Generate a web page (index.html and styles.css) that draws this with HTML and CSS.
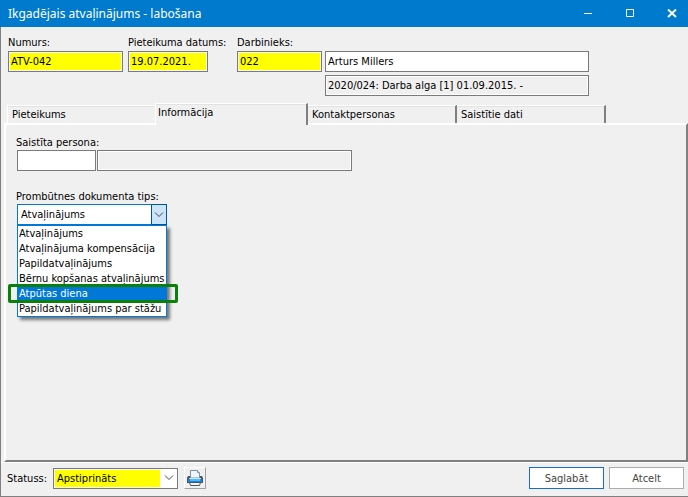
FILE: index.html
```html
<!DOCTYPE html>
<html lang="lv">
<head>
    <meta charset="UTF-8">
    <meta name="viewport" content="width=device-width, initial-scale=1.0">
    <title>Ikgadējais atvaļinājums - labošana</title>
    <link rel="stylesheet" href="styles.css">
</head>
<body>
    <header class="titlebar">
        <h1>Ikgadējais atvaļinājums - labošana</h1>
        <div class="window-controls">
            <button type="button" aria-label="Minimizēt">
                <svg width="10" height="10" viewBox="0 0 10 10"><path d="M1 4.5h8"/></svg>
            </button>
            <button type="button" aria-label="Maksimizēt">
                <svg width="10" height="10" viewBox="0 0 10 10"><path d="M1.5 .5h7v7h-7z"/></svg>
            </button>
            <button type="button" aria-label="Aizvērt">
                <svg width="10" height="10" viewBox="0 0 10 10"><path class="thick" d="M1 .5l8 7.5M9 .5l-8 7.5"/></svg>
            </button>
        </div>
    </header>

    <form class="window">
        <div class="document">
            <div class="field number">
                <label for="numurs">Numurs:</label>
                <input id="numurs" class="required" type="text" value="ATV-042">
            </div>
            <div class="field date">
                <label for="datums">Pieteikuma datums:</label>
                <input id="datums" class="required" type="text" value="19.07.2021.">
            </div>
            <div class="field code">
                <label for="darbinieks">Darbinieks:</label>
                <input id="darbinieks" class="required" type="text" value="022">
            </div>
            <div class="employee">
                <input type="text" value="Arturs Millers" aria-label="Darbinieka vārds">
                <input class="readonly" type="text" value="2020/024: Darba alga [1] 01.09.2015. -" aria-label="Līgums" readonly>
            </div>
        </div>

        <div class="tabs" role="tablist">
            <button type="button" role="tab">Pieteikums</button>
            <button type="button" role="tab" class="active" aria-selected="true">Informācija</button>
            <button type="button" role="tab">Kontaktpersonas</button>
            <button type="button" role="tab">Saistītie dati</button>
        </div>

        <section class="panel" role="tabpanel">
            <div class="field">
                <label for="persona">Saistīta persona:</label>
                <div class="person">
                    <input id="persona" class="person-code" type="text">
                    <input class="person-name readonly" type="text" aria-label="Personas vārds" readonly>
                </div>
            </div>

            <div class="field">
                <label for="tips">Prombūtnes dokumenta tips:</label>
                <div class="combo open">
                    <select id="tips">
                        <option>Atvaļinājums</option>
                    </select>
                    <span class="arrow">
                        <svg width="10" height="6" viewBox="0 0 10 6"><path d="M1 .5l4 4 4-4"/></svg>
                    </span>
                    <ul class="options" role="listbox">
                        <li role="option">Atvaļinājums</li>
                        <li role="option">Atvaļinājuma kompensācija</li>
                        <li role="option">Papildatvaļinājums</li>
                        <li role="option">Bērnu kopšanas atvaļinājums</li>
                        <li role="option" class="selected" aria-selected="true">Atpūtas diena</li>
                        <li role="option">Papildatvaļinājums par stāžu</li>
                    </ul>
                </div>
            </div>
        </section>

        <footer class="footer">
            <label for="statuss">Statuss:</label>
            <div class="combo status">
                <select id="statuss">
                    <option>Apstiprināts</option>
                </select>
                <span class="arrow">
                    <svg width="10" height="6" viewBox="0 0 10 6"><path d="M1 .5l4 4 4-4"/></svg>
                </span>
            </div>
            <button type="button" class="print" aria-label="Drukāt">
                <svg width="16" height="16" viewBox="0 0 16 16">
                    <path d="M3.5 8V.5h7l2 2V8z" fill="#eef5fb" stroke="#7c93a8"/>
                    <path d="M10.5.5v2h2" fill="#fff" stroke="#7c93a8"/>
                    <path d="M1 6h2v2h10V6h2l1 2v5H0V8z" fill="#4b555f"/>
                    <path d="M2 8h12v1H2z" fill="#c9e6fb"/>
                    <path d="M1 9h14v3H1z" fill="#1583e0"/>
                    <path d="M3 9h10v2H3z" fill="#55b8ff"/>
                    <path d="M2.5 12.5h11l-1 3h-9z" fill="#f4f8fb" stroke="#4b555f"/>
                </svg>
            </button>
            <div class="actions">
                <button type="submit" class="btn primary">Saglabāt</button>
                <button type="button" class="btn">Atcelt</button>
            </div>
        </footer>
    </form>
</body>
</html>
```

FILE: styles.css
```css
* {
    margin: 0;
    padding: 0;
    box-sizing: border-box;
}

body {
    min-height: 100vh;
    display: flex;
    flex-direction: column;
    background: #f0f0f0;
    color: #000;
    font-family: 'DejaVu Sans Condensed', 'Noto Sans', sans-serif;
    font-size: 11px;
    line-height: 15px;
}

input,
select,
button {
    font: inherit;
    color: inherit;
    border-radius: 0;
}

/* Title bar */
.titlebar {
    height: 27px;
    display: flex;
    align-items: center;
    justify-content: space-between;
    padding-left: 8px;
    background: #007acc;
    color: #fff;
}

.titlebar h1 {
    font-family: 'Noto Sans', sans-serif;
    font-size: 12px;
    font-weight: 400;
}

.window-controls {
    display: flex;
    gap: 10px;
}

.window-controls button {
    width: 32px;
    height: 24px;
    display: flex;
    align-items: center;
    justify-content: center;
    border: none;
    background: none;
}

.window-controls path {
    fill: none;
    stroke: #fff;
}

.window-controls .thick {
    stroke-width: 2;
}

.window {
    flex: 1;
    display: flex;
    flex-direction: column;
    border-left: 1px solid #808080;
    border-bottom: 1px solid #808080;
}

/* Fields */
.field label {
    display: block;
    white-space: nowrap;
}

input {
    width: 100%;
    height: 21px;
    padding: 0 2px;
    border: 1px solid #7a7a7a;
    background: #fff;
    display: block;
}

.required {
    background: #ff0;
    box-shadow: inset 0 0 0 1px #fff;
}

.readonly {
    background: #f0f0f0;
    box-shadow: inset 0 0 0 1px #fff;
}

.document {
    display: flex;
    padding: 8px 7px 7px;
}

.number {
    width: 115px;
    margin-right: 5px;
}

.date {
    width: 80px;
    margin-right: 29px;
}

.code {
    width: 85px;
    margin-right: 3px;
}

.document .field label {
    height: 16px;
}

.employee {
    width: 264px;
    padding-top: 16px;
    display: flex;
    flex-direction: column;
    gap: 3px;
}

/* Tabs */
.tabs {
    display: flex;
    align-items: flex-end;
    padding-left: 6px;
}

.tabs button {
    width: 149px;
    height: 18px;
    padding: 0 4px;
    text-align: left;
    background: #f0f0f0;
    border: none;
    border-top: 1px solid #fff;
    border-right: 2px solid #808080;
    box-shadow: inset 0 1px #e3e3e3;
}

.tabs button:first-child {
    width: 148px;
    border-left: 1px solid #fff;
    border-right: none;
}

.tabs .active {
    width: 153px;
    height: 22px;
    margin-bottom: -2px;
    padding-bottom: 4px;
    padding-left: 2px;
    border-left: 1px solid #fff;
    position: relative;
}

.panel {
    flex: 1;
    display: flex;
    flex-direction: column;
    gap: 18px;
    margin-left: 3px;
    padding: 10px;
    border: 2px solid;
    border-color: #fff #808080 #808080 #fff;
}

.person {
    display: flex;
    gap: 1px;
    padding-left: 1px;
}

.person-code {
    width: 79px;
}

.person-name {
    width: 255px;
}

/* Combo boxes */
.combo {
    position: relative;
    height: 21px;
    display: flex;
    background: #fff;
    border: 1px solid #7a7a7a;
}

.combo select {
    flex: 1;
    appearance: none;
    border: none;
    background: transparent;
    padding: 0 3px;
}

.arrow {
    width: 16px;
    display: flex;
    align-items: center;
    justify-content: center;
    pointer-events: none;
}

.arrow path {
    fill: none;
    stroke: #444;
}

.combo.open {
    width: 150px;
    margin-left: 1px;
    border-color: #0078d7;
}

.open .arrow {
    margin: -1px;
    background: #cce4f7;
    border: 1px solid #005499;
}

.options {
    position: absolute;
    top: 20px;
    left: -1px;
    width: 150px;
    list-style: none;
    background: #fff;
    border: 1px solid #0078d7;
    box-shadow: 3px 3px 3px rgba(0, 0, 0, 0.5);
}

.options li {
    position: relative;
    padding-left: 1px;
    white-space: nowrap;
}

.options .selected {
    background: #0078d7;
    color: #fff;
}

.options .selected::after {
    content: '';
    position: absolute;
    inset: -2px -12px -2px -10px;
    border: 3px solid #0a800a;
    border-radius: 2px;
}

/* Footer */
.footer {
    display: flex;
    align-items: center;
    gap: 6px;
    padding: 4px 4px 7px 6px;
    border-top: 1px solid #fff;
}

.status {
    width: 125px;
}

.status select {
    margin: 1px;
    padding: 0 2px;
    background: #ff0;
}

.print {
    width: 22px;
    height: 22px;
    display: flex;
    align-items: center;
    justify-content: center;
    background: #f0f0f0;
    border: 1px solid;
    border-color: #fff #a0a0a0 #a0a0a0 #fff;
}

.actions {
    display: flex;
    gap: 5px;
    margin-left: auto;
}

.btn {
    width: 75px;
    height: 22px;
    background: #fff;
    border: 1px solid #adadad;
    color: #444;
}

.btn.primary {
    border-color: #1a6ccc;
}
```
